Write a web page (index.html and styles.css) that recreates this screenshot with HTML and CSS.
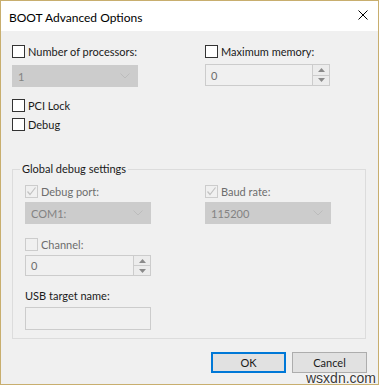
FILE: index.html
```html
<!DOCTYPE html>
<html lang="en">
<head>
    <meta charset="UTF-8" />
    <title>BOOT Advanced Options</title>
    <link rel="stylesheet" href="styles.css">
</head>
<body>
    <div class="window">
        <div class="titlebar">
            <span class="title">BOOT Advanced Options</span>
            <svg class="close" width="10" height="10" viewBox="0 0 10 10">
                <path d="M0.5 0.5 L9.5 9.5 M9.5 0.5 L0.5 9.5" stroke="#000" stroke-width="1" fill="none" />
            </svg>
        </div>

        <div class="content">
            <div class="top-grid">
                <div class="col">
                    <label class="check"><span class="box"></span>Number of processors:</label>
                    <div class="combo">
                        <span>1</span>
                        <svg width="10" height="6" viewBox="0 0 10 6"><path d="M0.5 0.5 L5 5 L9.5 0.5" stroke="#bcbcbc" fill="none" /></svg>
                    </div>
                    <label class="check pci"><span class="box"></span>PCI Lock</label>
                    <label class="check debug"><span class="box"></span>Debug</label>
                </div>
                <div class="col">
                    <label class="check"><span class="box"></span>Maximum memory:</label>
                    <div class="spin spin-top">
                        <span class="val">0</span>
                        <div class="spin-btns">
                            <span><svg width="7" height="4" viewBox="0 0 7 4"><path d="M0 4 L3.5 0 L7 4 Z" fill="#8a8a8a" /></svg></span>
                            <span><svg width="7" height="4" viewBox="0 0 7 4"><path d="M0 0 L3.5 4 L7 0 Z" fill="#8a8a8a" /></svg></span>
                        </div>
                    </div>
                </div>
            </div>

            <div class="group">
                <span class="legend">Global debug settings</span>
                <div class="group-grid">
                    <div class="col">
                        <label class="check off"><span class="box"><svg width="11" height="11" viewBox="0 0 11 11"><path d="M1.5 5.5 L4 8.5 L9.5 1.5" stroke="#c2c2c2" stroke-width="1.2" fill="none" /></svg></span>Debug port:</label>
                        <div class="combo sub">
                            <span>COM1:</span>
                            <svg width="10" height="6" viewBox="0 0 10 6"><path d="M0.5 0.5 L5 5 L9.5 0.5" stroke="#bcbcbc" fill="none" /></svg>
                        </div>
                        <label class="check off channel"><span class="box"></span>Channel:</label>
                        <div class="spin sub">
                            <span class="val">0</span>
                            <div class="spin-btns">
                                <span><svg width="7" height="4" viewBox="0 0 7 4"><path d="M0 4 L3.5 0 L7 4 Z" fill="#8a8a8a" /></svg></span>
                                <span><svg width="7" height="4" viewBox="0 0 7 4"><path d="M0 0 L3.5 4 L7 0 Z" fill="#8a8a8a" /></svg></span>
                            </div>
                        </div>
                        <div class="usb-label">USB target name:</div>
                        <div class="textbox"></div>
                    </div>
                    <div class="col">
                        <label class="check off"><span class="box"><svg width="11" height="11" viewBox="0 0 11 11"><path d="M1.5 5.5 L4 8.5 L9.5 1.5" stroke="#c2c2c2" stroke-width="1.2" fill="none" /></svg></span>Baud rate:</label>
                        <div class="combo sub">
                            <span>115200</span>
                            <svg width="10" height="6" viewBox="0 0 10 6"><path d="M0.5 0.5 L5 5 L9.5 0.5" stroke="#bcbcbc" fill="none" /></svg>
                        </div>
                    </div>
                </div>
            </div>

            <div class="buttons">
                <button class="btn default">OK</button>
                <button class="btn">Cancel</button>
            </div>
        </div>

        <div class="watermark">wsxdn.com</div>
    </div>
</body>
</html>
```

FILE: styles.css
```css
body {
    margin: 0;
    font-family: 'Lato', 'Liberation Sans', sans-serif;
    font-size: 11px;
    color: #000;
    background: #f0f0f0;
}

.window {
    position: relative;
    width: 379px;
    height: 385px;
    box-sizing: border-box;
    border: 1px solid #c8ae6e; /* accent border */
    background: #f0f0f0;
    overflow: hidden;
}

.titlebar {
    height: 30px;
    background: #fff;
    display: flex;
    align-items: center;
    justify-content: space-between;
    padding: 0 10px 0 8px;
}

.title {
    font-size: 12px;
    padding-top: 2px;
}

.close {
    margin-top: -2px;
}

.content {
    padding: 14px 11px 0 11px;
}

.top-grid {
    display: grid;
    grid-template-columns: 193px 1fr;
}

.col {
    display: flex;
    flex-direction: column;
    align-items: flex-start;
}

/* checkboxes */
.check {
    display: flex;
    align-items: center;
    height: 13px;
    line-height: 13px;
    color: #1a1a1a;
}

.box {
    width: 13px;
    height: 13px;
    box-sizing: border-box;
    border: 1px solid #333;
    background: #fff;
    margin-right: 3px;
    display: flex;
    align-items: center;
    justify-content: center;
}

.check.off {
    color: #6d6d6d;
}

.check.off .box {
    border-color: #cccccc;
    background: #f0f0f0;
}

.pci {
    margin-top: 12px;
}

.debug {
    margin-top: 6px;
}

/* disabled combo boxes */
.combo {
    width: 126px;
    height: 22px;
    margin-top: 7px;
    box-sizing: border-box;
    background: #cccccc;
    border: 1px solid #cccccc;
    color: #838383;
    display: flex;
    align-items: center;
    justify-content: space-between;
    padding: 0 7px 0 5px;
}

.combo.sub {
    margin-top: 4px;
}

/* spinners */
.spin {
    width: 125px;
    height: 22px;
    margin-top: 6px;
    box-sizing: border-box;
    border: 1px solid #cccccc;
    background: #f0f0f0;
    color: #6d6d6d;
    display: flex;
}

.spin.sub {
    width: 126px;
    height: 21px;
    margin-top: 4px;
}

.spin .val {
    flex: 1;
    padding-left: 5px;
    display: flex;
    align-items: center;
}

.spin-btns {
    width: 16px;
    display: flex;
    flex-direction: column;
    border-left: 1px solid #cccccc;
}

.spin-btns span {
    flex: 1;
    display: flex;
    align-items: center;
    justify-content: center;
    background: #ececec;
}

.spin-btns span + span {
    border-top: 1px solid #cccccc;
}

/* group box */
.group {
    position: relative;
    margin-top: 38px;
    width: 354px;
    box-sizing: border-box;
    border: 1px solid #dcdcdc;
    padding: 15px 12px 8px 12px;
}

.legend {
    position: absolute;
    top: -8px;
    left: 7px;
    padding: 0 2px;
    background: #f0f0f0;
    line-height: 14px;
    color: #1a1a1a;
}

.group-grid {
    display: grid;
    grid-template-columns: 180px 1fr;
}

.channel {
    margin-top: 14px;
}

.usb-label {
    margin-top: 13px;
    line-height: 13px;
    color: #1a1a1a;
}

.textbox {
    width: 126px;
    height: 23px;
    margin-top: 5px;
    box-sizing: border-box;
    border: 1px solid #cccccc;
    background: #f0f0f0;
}

/* dialog buttons */
.buttons {
    width: 355px;
    display: flex;
    justify-content: flex-end;
    gap: 6px;
    margin-top: 13px;
}

.btn {
    width: 75px;
    height: 21px;
    box-sizing: border-box;
    font-family: inherit;
    font-size: 11px;
    background: #e1e1e1;
    border: 1px solid #adadad;
    padding: 0;
    color: #1a1a1a;
}

.btn.default {
    border: 2px solid #0078d7;
}

.watermark {
    position: absolute;
    left: 305px;
    top: 369px;
    font-family: 'Liberation Sans', sans-serif;
    font-size: 14px;
    color: #3a3a3a;
    text-shadow: 0 0 2px #fff, 0 0 2px #fff;
}
```
